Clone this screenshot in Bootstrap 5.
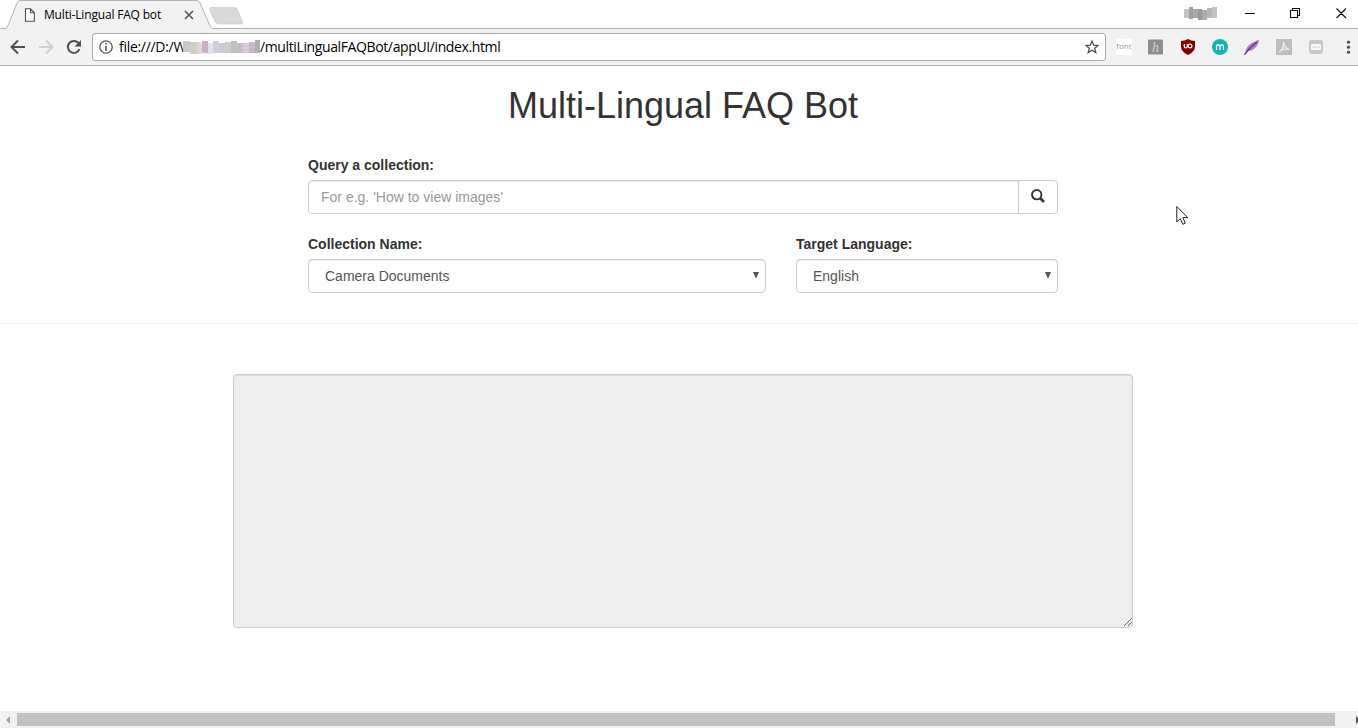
<!DOCTYPE html>
<html lang="en">
<head>
<meta charset="utf-8">
<meta name="viewport" content="width=device-width, initial-scale=1">
<title>Multi-Lingual FAQ bot</title>
<link href="https://cdn.jsdelivr.net/npm/bootstrap@5.3.0/dist/css/bootstrap.min.css" rel="stylesheet">
<style>
body{font-family:"Liberation Sans",Arial,sans-serif;font-size:14px;line-height:20px;color:#333;height:728px}
svg{display:block;flex:none}
.chrome-font{font-family:"Open Sans","Noto Sans",sans-serif;color:#000;white-space:nowrap}
.tabstrip{height:28px}
.tab-shape{position:absolute;left:0;top:0}
.tab-inner{width:205px;height:28px;padding:2px 0 0 24px}
.tab-title{font-size:12px;width:136px;flex:none;margin-left:9px;line-height:26px;letter-spacing:-.18px}
.toolbar{height:38px;background:#f2f2f2;border-top:1px solid #b3b3b3;border-bottom:1px solid #b0b0b0;padding:0 0 1px 10px}
.omnibox{width:1014px;height:28px;margin-left:10px;padding:0 6px;background:#fff;border:1px solid #a9a9a9;border-radius:3px}
.url{font-size:14px;margin-left:6px;line-height:26px}
.url-a{width:64px;flex:none;letter-spacing:-.3px}
.url-b{letter-spacing:-.38px}
.ext{margin-left:10px;gap:16px}
.font-ext{width:16px;height:16px;background:#fff;color:#999;font-size:8px;line-height:14px;text-align:center}
.page{width:1366px;height:645px}
.page-title{font-size:36px;line-height:40px;margin:20px 0 29px;font-weight:400}
.query-form{width:750px}
.form-label{font-weight:700;margin-bottom:5px;display:block}
.field{height:34px;font-size:14px;line-height:20px;color:#555;border:1px solid #ccc;border-radius:4px;box-shadow:inset 0 1px 1px rgba(0,0,0,.075)}
.field::placeholder{color:#999;opacity:1}
.form-control.field{padding:6px 12px}
.form-select.field{padding:6px 16px;background-image:url("data:image/svg+xml,%3Csvg xmlns='http://www.w3.org/2000/svg' width='6' height='6'%3E%3Cpath d='M0 0h6L3.4 6h-.8z' fill='%23555'/%3E%3C/svg%3E");background-size:6px 6px;background-position:right 6px top 12px}
.search-btn{width:40px;height:34px;border:1px solid #ccc;border-radius:0 4px 4px 0;padding:0 0 2px;background:#fff}
.divider{border-top:1px solid #eee;margin:30px 0 50px}
.answer{width:900px}
.answer .field{height:254px;resize:none;background:#eee}
.grip{position:absolute;right:0;bottom:1px}
.pointer{position:absolute;left:1176px;top:205px}
.hscroll{height:17px;background:#f1f1f1;padding-left:6px}
.thumb{width:1318px;height:13px;flex:none;background:#c1c1c1;margin-left:7px}
</style>
<script src="https://cdn.jsdelivr.net/npm/bootstrap@5.3.0/dist/js/bootstrap.bundle.min.js"></script>
</head>
<body class="overflow-hidden position-relative bg-white">
<header class="chrome-font">
  <div class="tabstrip d-flex justify-content-between position-relative">
    <svg class="tab-shape z-1" width="250" height="30" viewBox="0 0 250 30"><path d="M5 29.5V28.5Q7 28 8 25.500L17 3Q18.300.5 20 .5H197Q199 .5 200 3L210 26Q211 28.500 213 28.500V29.500Z" fill="#f2f2f2"/><path d="M5 28.500Q7 28 8 25.500L17 3Q18.300.5 20 .5H197Q199 .5 200 3L210 26Q211 28.500 213 28.500" fill="none" stroke="#b3b3b3"/><path d="M211 7.500H234Q236.500 7.500 237.500 9.500L242.500 22Q243 24 241 24H219Q216 24 215 22L209.500 10Q208.700 7.500 211 7.500Z" fill="#d8d8d8" stroke="#cdcdcd" stroke-width=".7"/></svg>
    <div class="tab-inner d-flex align-items-center position-relative z-2">
      <svg width="11" height="14" viewBox="0 0 11 14"><path d="M1.500 .8H6.500L10.300 4.600V13.200H1.500ZM6.500 .8V4.800H10" fill="#fff" stroke="#505050" stroke-width="1.100"/></svg>
      <span class="tab-title">Multi-Lingual FAQ bot</span>
      <svg width="10" height="10" viewBox="0 0 10 10" style="margin-left:4px"><path d="M1 1L9 9M9 1L1 9" stroke="#555" stroke-width="1.600"/></svg>
    </div>
    <svg width="174" height="28" viewBox="1184 0 174 28">
      <g><path d="M1184 9h5v9h-5z" fill="#c4c4c4"/><path d="M1189 7h4v12h-4z" fill="#a2a2a2"/><path d="M1193 9h5v9h-5z" fill="#a8a8a8"/><path d="M1198 9h4v11h-4z" fill="#999"/><path d="M1202 10h5v10h-5z" fill="#aaa"/><path d="M1207 8h5v10h-5z" fill="#b5b5b5"/><path d="M1212 7h5v11h-5z" fill="#c4c4c4"/></g>
      <path d="M1245 13.500h10M1290.500 10.500h7v7h-7zM1292.500 10.500v-2h7v7h-2M1336.500 8.500l9.500 9.500M1346 8.500l-9.500 9.500" stroke="#111" stroke-width="1.100" fill="none"/>
    </svg>
  </div>
  <div class="toolbar d-flex align-items-center">
    <svg width="72" height="20" viewBox="10 37 72 20"><g fill="none" stroke-width="2"><path d="M25 47H12M18 40.500L11.500 47L18 53.500" stroke="#505050"/><path d="M39 47H52M46 40.500L52.500 47L46 53.500" stroke="#d0d0d0"/><path d="M78.800 43.500A6 6 0 1 0 79.500 49" stroke="#505050"/></g><path d="M81 40v6.500h-6.500z" fill="#505050"/></svg>
    <div class="omnibox d-flex align-items-center">
      <svg width="14" height="14" viewBox="0 0 14 14"><circle cx="7" cy="7" r="6.200" fill="none" stroke="#555" stroke-width="1.300"/><path d="M6.200 3h1.600v1.600H6.200zM6.200 6h1.600v5H6.200z" fill="#555"/></svg>
      <div class="url d-flex align-items-center flex-grow-1"><span class="url-a">file:///D:/W</span>
        <svg class="position-relative" width="77" height="14" viewBox="183 40 77 14"><path d="M183 41h7v11h-7z" fill="#c9c9cd"/><path d="M190 42h7v12h-7z" fill="#cfcfc9"/><path d="M197 42h5v12h-5z" fill="#dedbd1"/><path d="M202 41h6v12h-6z" fill="#c5b2c2"/><path d="M208 43h5v11h-5z" fill="#e0e4ee"/><path d="M213 41h6v12h-6z" fill="#c8d4d3"/><path d="M219 43h6v10h-6z" fill="#d3c9d4"/><path d="M225 42h6v11h-6z" fill="#d1cbc4"/><path d="M231 41h6v12h-6z" fill="#b6c5c2"/><path d="M237 43h6v10h-6z" fill="#c9bac7"/><path d="M243 43h6v10h-6z" fill="#d7cbd0"/><path d="M249 42h6v11h-6z" fill="#c0bac9"/><path d="M255 40h5v13h-5z" fill="#b6a9ba"/></svg>
        <span class="url-b">/multiLingualFAQBot/appUI/index.html</span></div>
      <svg width="14" height="14" viewBox="0 0 14 14"><path d="M7 1.200L8.700 5.200L13 5.500L9.700 8.300L10.800 12.600L7 10.300L3.200 12.600L4.300 8.300L1 5.500L5.300 5.200Z" fill="none" stroke="#505050" stroke-width="1.300"/></svg>
    </div>
    <div class="ext d-flex align-items-center">
      <div class="font-ext">font</div>
      <svg width="16" height="16" viewBox="0 0 16 16"><rect width="15" height="15" y=".5" rx="1" fill="#8e8e8e"/><text x="4" y="13" font-family="Liberation Serif" font-style="italic" font-size="14" fill="#d0d0d0">h</text></svg>
      <svg width="16" height="16" viewBox="0 0 16 16"><path d="M8 0Q11 2 15 2V7Q15 13 8 16Q1 13 1 7V2Q5 2 8 0Z" fill="#800000"/><path d="M4.300 5v2.500q0 1.500 1.500 1.500t1.500-1.500V5" fill="none" stroke="#fff" stroke-width="1.200"/><circle cx="10" cy="7" r="1.900" fill="none" stroke="#fff" stroke-width="1.200"/></svg>
      <svg width="16" height="16" viewBox="0 0 16 16"><circle cx="8" cy="8" r="8" fill="#12b5ad"/><path d="M4.500 11V5.500M4.500 7.500q0-1.700 1.700-1.700T8 7.500V11M8 7.500q0-1.700 1.800-1.700t1.700 1.700V11" fill="none" stroke="#fff" stroke-width="1.200"/></svg>
      <svg width="16" height="16" viewBox="0 0 16 16"><path d="M1 14.500Q2 7 8 4L15 .5Q14.500 6 10.500 9.500Q7 12.500 4 12Z" fill="#a77bd0"/><path d="M.5 15.500Q6 8 13 3" fill="none" stroke="#682d9b" stroke-width="1.300"/></svg>
      <svg width="16" height="16" viewBox="0 0 16 16"><path d="M0 0h16v16H0z" fill="#bdbdbd"/><path d="M3 13Q8.500 9.500 7.500 2.500Q7.500 9 13.500 10.500Q7 9 3 13" fill="none" stroke="#eee" stroke-width="1.300"/></svg>
      <svg width="16" height="16" viewBox="0 0 16 16"><rect x="1" y="1" width="14" height="14" rx="3" fill="#c8c8c8"/><rect x="3" y="5" width="10" height="6" rx="1" fill="#f7f7f7"/><path d="M5 8h1.500M7.500 8h1.500M10 8h1.500" stroke="#bbb"/></svg>
      <svg width="16" height="16" viewBox="0 0 16 16"><g fill="#505050"><circle cx="8.500" cy="3.200" r="1.600"/><circle cx="8.500" cy="8.200" r="1.600"/><circle cx="8.500" cy="13.200" r="1.600"/></g></svg>
    </div>
  </div>
</header>
<main class="page d-flow-root overflow-hidden">
  <h1 class="page-title text-center">Multi-Lingual FAQ Bot</h1>
  <form class="query-form mx-auto">
    <label class="form-label" for="query">Query a collection:</label>
    <div class="input-group flex-nowrap" style="margin-bottom:20px">
      <input id="query" class="form-control field" type="text" placeholder="For e.g. 'How to view images'">
      <button class="btn search-btn d-flex align-items-center justify-content-center" type="button" aria-label="Search"><svg width="14" height="14" viewBox="0 0 14 14"><circle cx="5.700" cy="5.700" r="4.700" fill="none" stroke="#333" stroke-width="1.900"/><path d="M9 9L13 13" stroke="#333" stroke-width="2.600"/></svg></button>
    </div>
    <div class="d-flex justify-content-between">
      <div style="width:458px"><label class="form-label" for="coll">Collection Name:</label><select id="coll" class="form-select field"><option>Camera Documents</option></select></div>
      <div style="width:262px"><label class="form-label" for="lang">Target Language:</label><select id="lang" class="form-select field"><option>English</option></select></div>
    </div>
  </form>
  <div class="divider"></div>
  <div class="answer mx-auto position-relative">
    <textarea class="form-control field" readonly aria-label="Answer"></textarea>
    <svg class="grip" width="10" height="10" viewBox="0 0 10 10"><path d="M1 9L9 1M5 9L9 5" stroke="#444" stroke-width="1" stroke-dasharray="1.100 .3"/></svg>
  </div>
</main>
<div class="hscroll d-flex align-items-center">
  <svg width="4" height="8" viewBox="0 0 4 8"><path d="M4 0v8L0 4z" fill="#a3a3a3"/></svg>
  <div class="thumb"></div>
  <svg width="4" height="8" viewBox="0 0 4 8" style="margin-left:21px"><path d="M0 0v8l4-4z" fill="#505050"/></svg>
</div>
<svg class="pointer" width="13" height="21" viewBox="0 0 13 21"><path d="M.8 1.500V17L4.300 13.700L6.800 19.300L9.300 18.200L6.900 12.600H11.800Z" fill="#fff" stroke="#222" stroke-width="1"/></svg>
</body>
</html>
